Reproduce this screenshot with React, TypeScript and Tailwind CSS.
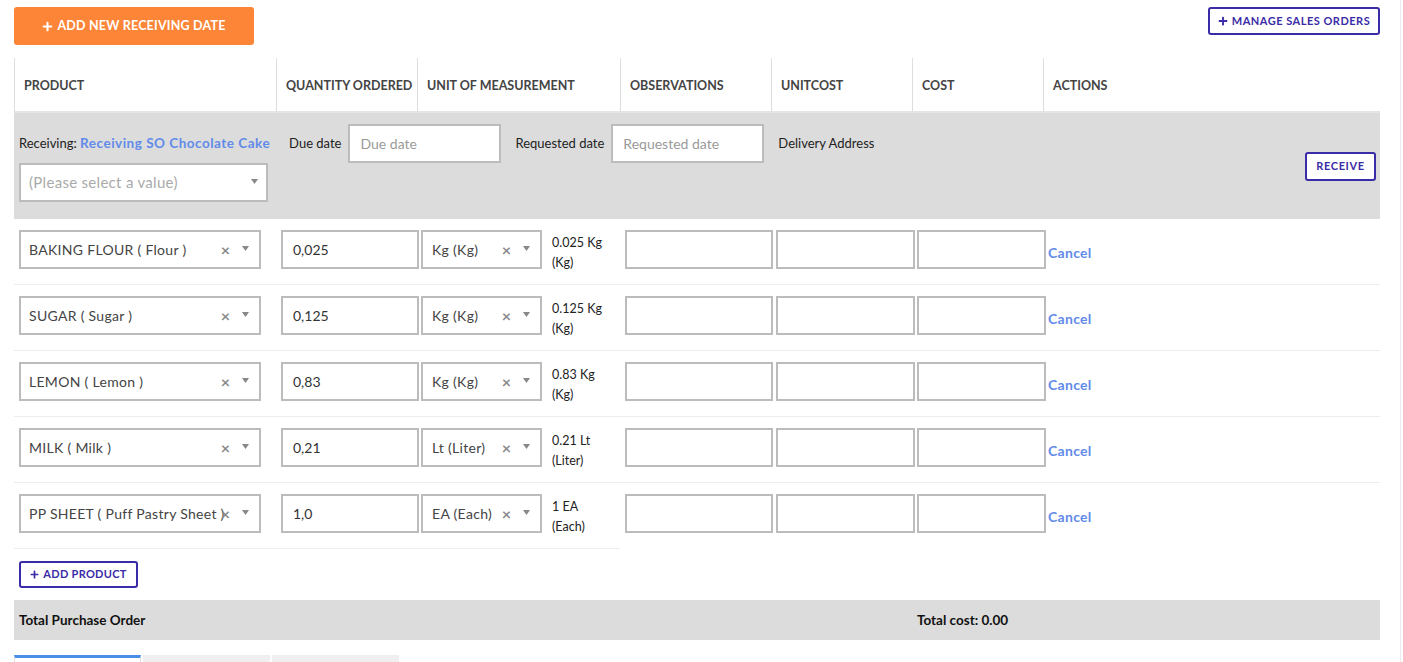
import { FaPlus } from "react-icons/fa"

const rows = [
  { product: "BAKING FLOUR ( Flour )", qty: "0,025", unit: "Kg (Kg)", l1: "0.025 Kg", l2: "(Kg)" },
  { product: "SUGAR ( Sugar )", qty: "0,125", unit: "Kg (Kg)", l1: "0.125 Kg", l2: "(Kg)" },
  { product: "LEMON ( Lemon )", qty: "0,83", unit: "Kg (Kg)", l1: "0.83 Kg", l2: "(Kg)" },
  { product: "MILK ( Milk )", qty: "0,21", unit: "Lt (Liter)", l1: "0.21 Lt", l2: "(Liter)" },
  { product: "PP SHEET ( Puff Pastry Sheet )", qty: "1,0", unit: "EA (Each)", l1: "1 EA", l2: "(Each)" },
]

const headers = [
  { label: "PRODUCT", w: "w-[262px]" },
  { label: "QUANTITY ORDERED", w: "w-[141px]" },
  { label: "UNIT OF MEASUREMENT", w: "w-[203px]" },
  { label: "OBSERVATIONS", w: "w-[151px]" },
  { label: "UNITCOST", w: "w-[141px]" },
  { label: "COST", w: "w-[131px]" },
  { label: "ACTIONS", w: "flex-1" },
]

function Caret() {
  return (
    <svg width="7" height="5" viewBox="0 0 7 5" className="shrink-0">
      <path d="M0 0 L7 0 L3.5 5 Z" fill="#888" />
    </svg>
  )
}

function Select2({ text, width, pad }: { text: string; width: string; pad: string }) {
  return (
    <div className={`relative h-[39px] ${width} shrink-0 border-2 border-[#bcbcbc] bg-white`}>
      <div className={`flex h-full items-center ${pad} text-[14px] tracking-[0.3px] whitespace-nowrap text-[#444]`}>
        {text}
      </div>
      <span className="absolute top-[6px] right-[29px] text-[16px] font-bold text-[#8a8a8a]">×</span>
      <span className="absolute top-[14px] right-[10px]">
        <Caret />
      </span>
    </div>
  )
}

export default function App() {
  return (
    <div className="min-h-[662px] w-[1401px] border-r border-[#ececec] bg-white pl-[14px] pr-[20px] font-['Lato','Noto_Sans',sans-serif] text-[13px] text-[#222]">
      <div className="flex items-start justify-between pt-[7px]">
        <button className="flex h-[38px] w-[240px] items-center justify-center gap-[4px] rounded-[3px] bg-[#fd8537] text-[12.5px] font-bold tracking-[0.2px] text-white">
          <FaPlus className="h-[11px] w-[11px]" />
          ADD NEW RECEIVING DATE
        </button>
        <button className="flex h-[28px] w-[172px] items-center justify-center gap-[4px] rounded-[3px] border-2 border-[#3a2ba6] text-[11px] font-bold tracking-[0.5px] text-[#3a2ba6]">
          <FaPlus className="h-[10px] w-[10px]" />
          MANAGE SALES ORDERS
        </button>
      </div>

      <div className="mt-[13px] flex h-[55px] border-b-2 border-[#e4e4e4]">
        {headers.map((h) => (
          <div
            key={h.label}
            className={`${h.w} flex items-center border-l border-[#dedede] pt-[4px] pl-[9px] text-[12.5px] font-bold whitespace-nowrap text-[#444]`}
          >
            {h.label}
          </div>
        ))}
      </div>

      <div className="flex h-[106px] items-center bg-[#dcdcdc] pl-[5px] pr-[4px]">
        <div className="flex flex-1 flex-col self-stretch pt-[11px]">
          <div className="flex h-[39px] items-center">
            <span className="text-[#222]">Receiving:&nbsp;</span>
            <span className="text-[13.5px] font-bold tracking-[0.5px] text-[#628be9]">Receiving SO Chocolate Cake</span>
            <span className="ml-[19px]">Due date</span>
            <div className="ml-[7px] flex h-[39px] w-[153px] items-center border-2 border-[#bcbcbc] bg-white pl-[10px] text-[14px] text-[#9a9a9a]">
              Due date
            </div>
            <span className="ml-[14px]">Requested date</span>
            <div className="ml-[7px] flex h-[39px] w-[153px] items-center border-2 border-[#bcbcbc] bg-white pl-[10px] text-[14px] text-[#9a9a9a]">
              Requested date
            </div>
            <span className="ml-[14px]">Delivery Address</span>
          </div>
          <div className="relative flex h-[39px] w-[249px] items-center border-2 border-[#bcbcbc] bg-white pl-[8px] text-[15px] tracking-[0.3px] text-[#aaa]">
            (Please select a value)
            <span className="absolute top-[14px] right-[8px]">
              <Caret />
            </span>
          </div>
        </div>
        <button className="h-[29px] w-[71px] rounded-[3px] border-2 border-[#3a2ba6] bg-white text-[11px] font-bold tracking-[0.6px] text-[#3a2ba6]">
          RECEIVE
        </button>
      </div>

      {rows.map((r, i) => (
        <div
          key={r.product}
          className={`flex h-[66px] items-start border-b border-[#ededed] pt-[11px] pl-[5px] ${i === rows.length - 1 ? "w-[606px]" : ""}`}
        >
          <Select2 text={r.product} width="w-[242px]" pad="pl-[8px]" />
          <div className="ml-[20px] flex h-[39px] w-[138px] shrink-0 items-center border-2 border-[#bcbcbc] bg-white pl-[10px] text-[14px] text-[#333]">
            {r.qty}
          </div>
          <div className="ml-[2px]">
            <Select2 text={r.unit} width="w-[121px]" pad="pl-[9px]" />
          </div>
          <div className="mt-[3px] ml-[10px] w-[58px] shrink-0 text-[12.5px] leading-[20px] text-[#222]">
            <div>{r.l1}</div>
            <div>{r.l2}</div>
          </div>
          <div className={`ml-[15px] flex shrink-0 items-start ${i === rows.length - 1 ? "-mr-[800px]" : ""}`}>
            <div className="h-[39px] w-[148px] border-2 border-[#bcbcbc] bg-white" />
            <div className="ml-[3px] h-[39px] w-[139px] border-2 border-[#bcbcbc] bg-white" />
            <div className="ml-[2px] h-[39px] w-[129px] border-2 border-[#bcbcbc] bg-white" />
            <span className="mt-[13px] ml-[2px] text-[14px] leading-[20px] font-bold tracking-[0.3px] text-[#628be9]">
              Cancel
            </span>
          </div>
        </div>
      ))}

      <button className="mt-[12px] ml-[5px] flex h-[27px] w-[119px] items-center justify-center gap-[4px] rounded-[3px] border-2 border-[#3a2ba6] text-[11px] font-bold tracking-[0.3px] text-[#3a2ba6]">
        <FaPlus className="h-[9px] w-[9px]" />
        ADD PRODUCT
      </button>

      <div className="mt-[12px] flex h-[40px] items-center bg-[#dcdcdc] pl-[5px] text-[13.5px] font-bold text-[#111]">
        <span className="w-[898px]">Total Purchase Order</span>
        <span>Total cost: 0.00</span>
      </div>

      <div className="mt-[15px] flex gap-[2px]">
        <div className="h-[10px] w-[127px] border-x border-t-[3px] border-x-[#e2e2e2] border-t-[#4a8fe6] bg-white" />
        <div className="h-[10px] w-[127px] bg-[#efefef]" />
        <div className="h-[10px] w-[127px] bg-[#efefef]" />
      </div>
    </div>
  )
}
